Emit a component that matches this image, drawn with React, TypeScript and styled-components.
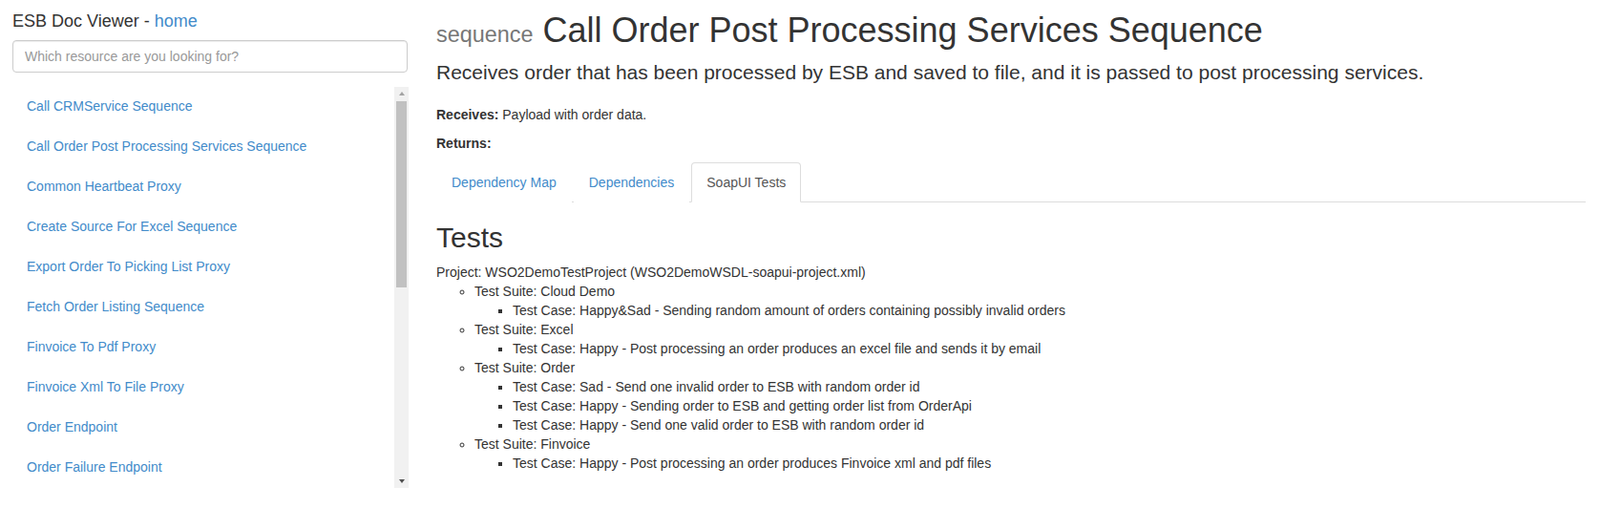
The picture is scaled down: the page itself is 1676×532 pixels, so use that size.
import styled, { createGlobalStyle } from "styled-components";

const GlobalStyle = createGlobalStyle`
  body {
    margin: 0;
    font-family: "Liberation Sans", Arial, Helvetica, sans-serif;
    font-size: 14px;
    line-height: 20px;
    color: #333;
    background: #fff;
  }
  * {
    box-sizing: border-box;
  }
`;

const Page = styled.div`
  display: flex;
  align-items: flex-start;
  width: 100%;
`;

const Sidebar = styled.aside`
  flex: none;
  width: 428px;
  padding-left: 13px;
`;

const Brand = styled.div`
  margin: 12px 0 10px;
  font-size: 18px;
  line-height: 20px;
  color: #333;
`;

const Link = styled.a`
  color: #428bca;
  text-decoration: none;
  cursor: pointer;
`;

const Search = styled.input`
  display: block;
  width: 414px;
  height: 34px;
  padding: 6px 12px;
  font-family: inherit;
  font-size: 14px;
  line-height: 20px;
  color: #555;
  border: 1px solid #ccc;
  border-radius: 4px;
  box-shadow: inset 0 1px 1px rgba(0, 0, 0, 0.075);
  outline: none;
  &::placeholder {
    color: #999;
  }
`;

// list box with a drawn scrollbar (headless browser hides the real one)
const ListFrame = styled.div`
  position: relative;
  margin-top: 15px;
  width: 415px;
  height: 420px;
  overflow: hidden;
`;

const ResourceList = styled.ul`
  list-style: none;
  margin: 0;
  padding: 0 15px 0 0;
`;

const ResourceItem = styled.li`
  & + & {
    margin-top: 2px;
  }
`;

const ResourceLink = styled(Link)`
  display: block;
  padding: 10px 15px;
  line-height: 20px;
  border-radius: 4px;
`;

const ScrollTrack = styled.div`
  position: absolute;
  top: 0;
  right: 0;
  bottom: 0;
  width: 15px;
  display: flex;
  flex-direction: column;
  background: #f1f1f1;
`;

const ScrollButton = styled.div<{ $down?: boolean }>`
  flex: none;
  height: 15px;
  display: flex;
  align-items: center;
  justify-content: center;
  &::after {
    content: "";
    width: 0;
    height: 0;
    border-left: 3.5px solid transparent;
    border-right: 3.5px solid transparent;
    ${(p) =>
      p.$down
        ? "border-top: 4px solid #505050; margin-top: 1px;"
        : "border-bottom: 4px solid #a3a3a3; margin-bottom: 1px;"}
  }
`;

const ScrollArea = styled.div`
  flex: 1;
  padding: 0 2px;
`;

const ScrollThumb = styled.div`
  height: 195px;
  background: #c1c1c1;
`;

const Main = styled.main`
  flex: 1;
  min-width: 0;
  margin-left: 29px;
  padding-right: 15px;
`;

const Title = styled.h1`
  margin: 12px 0 9px;
  font-size: 36px;
  font-weight: 500;
  line-height: 1.1;
  color: #333;
`;

const Kind = styled.small`
  font-size: 65%;
  font-weight: 400;
  color: #777;
`;

const Lead = styled.p`
  margin: 0 0 20px;
  font-size: 21px;
  line-height: 1.4;
  font-weight: 300;
`;

const Field = styled.p`
  margin: 0 0 10px;
`;

const Tabs = styled.ul`
  display: flex;
  list-style: none;
  margin: 0;
  padding: 0;
  border-bottom: 1px solid #ddd;
`;

const Tab = styled.li`
  margin-bottom: -1px;
`;

const TabLink = styled.a<{ $active?: boolean }>`
  display: block;
  margin-right: 2px;
  padding: 10px 15px;
  line-height: 20px;
  text-decoration: none;
  cursor: pointer;
  border: 1px solid ${(p) => (p.$active ? "#ddd" : "transparent")};
  border-bottom-color: transparent;
  border-radius: 4px 4px 0 0;
  background: #fff;
  color: ${(p) => (p.$active ? "#555" : "#428bca")};
`;

const SectionTitle = styled.h2`
  margin: 20px 0 10px;
  font-size: 30px;
  font-weight: 500;
  line-height: 1.1;
  color: #333;
`;

const TreeList = styled.ul<{ $marker: string }>`
  margin: 0;
  padding-left: 40px;
  list-style-type: ${(p) => p.$marker};
`;

const resources = [
  "Call CRMService Sequence",
  "Call Order Post Processing Services Sequence",
  "Common Heartbeat Proxy",
  "Create Source For Excel Sequence",
  "Export Order To Picking List Proxy",
  "Fetch Order Listing Sequence",
  "Finvoice To Pdf Proxy",
  "Finvoice Xml To File Proxy",
  "Order Endpoint",
  "Order Failure Endpoint",
];

const suites = [
  {
    name: "Cloud Demo",
    cases: ["Happy&Sad - Sending random amount of orders containing possibly invalid orders"],
  },
  {
    name: "Excel",
    cases: ["Happy - Post processing an order produces an excel file and sends it by email"],
  },
  {
    name: "Order",
    cases: [
      "Sad - Send one invalid order to ESB with random order id",
      "Happy - Sending order to ESB and getting order list from OrderApi",
      "Happy - Send one valid order to ESB with random order id",
    ],
  },
  {
    name: "Finvoice",
    cases: ["Happy - Post processing an order produces Finvoice xml and pdf files"],
  },
];

const tabs = ["Dependency Map", "Dependencies", "SoapUI Tests"];

function App() {
  return (
    <>
      <GlobalStyle />
      <Page>
        <Sidebar>
          <Brand>
            ESB Doc Viewer - <Link>home</Link>
          </Brand>
          <Search placeholder="Which resource are you looking for?" />
          <ListFrame>
            <ResourceList>
              {resources.map((r) => (
                <ResourceItem key={r}>
                  <ResourceLink>{r}</ResourceLink>
                </ResourceItem>
              ))}
            </ResourceList>
            <ScrollTrack>
              <ScrollButton />
              <ScrollArea>
                <ScrollThumb />
              </ScrollArea>
              <ScrollButton $down />
            </ScrollTrack>
          </ListFrame>
        </Sidebar>
        <Main>
          <Title>
            <Kind>sequence</Kind> Call Order Post Processing Services Sequence
          </Title>
          <Lead>
            Receives order that has been processed by ESB and saved to file, and it is passed to
            post processing services.
          </Lead>
          <Field>
            <strong>Receives:</strong> Payload with order data.
          </Field>
          <Field>
            <strong>Returns:</strong>
          </Field>
          <Tabs>
            {tabs.map((t) => (
              <Tab key={t}>
                <TabLink $active={t === "SoapUI Tests"}>{t}</TabLink>
              </Tab>
            ))}
          </Tabs>
          <SectionTitle>Tests</SectionTitle>
          <div>Project: WSO2DemoTestProject (WSO2DemoWSDL-soapui-project.xml)</div>
          <TreeList $marker="circle">
            {suites.map((s) => (
              <li key={s.name}>
                Test Suite: {s.name}
                <TreeList $marker="square">
                  {s.cases.map((c) => (
                    <li key={c}>Test Case: {c}</li>
                  ))}
                </TreeList>
              </li>
            ))}
          </TreeList>
        </Main>
      </Page>
    </>
  );
}

export default App;
